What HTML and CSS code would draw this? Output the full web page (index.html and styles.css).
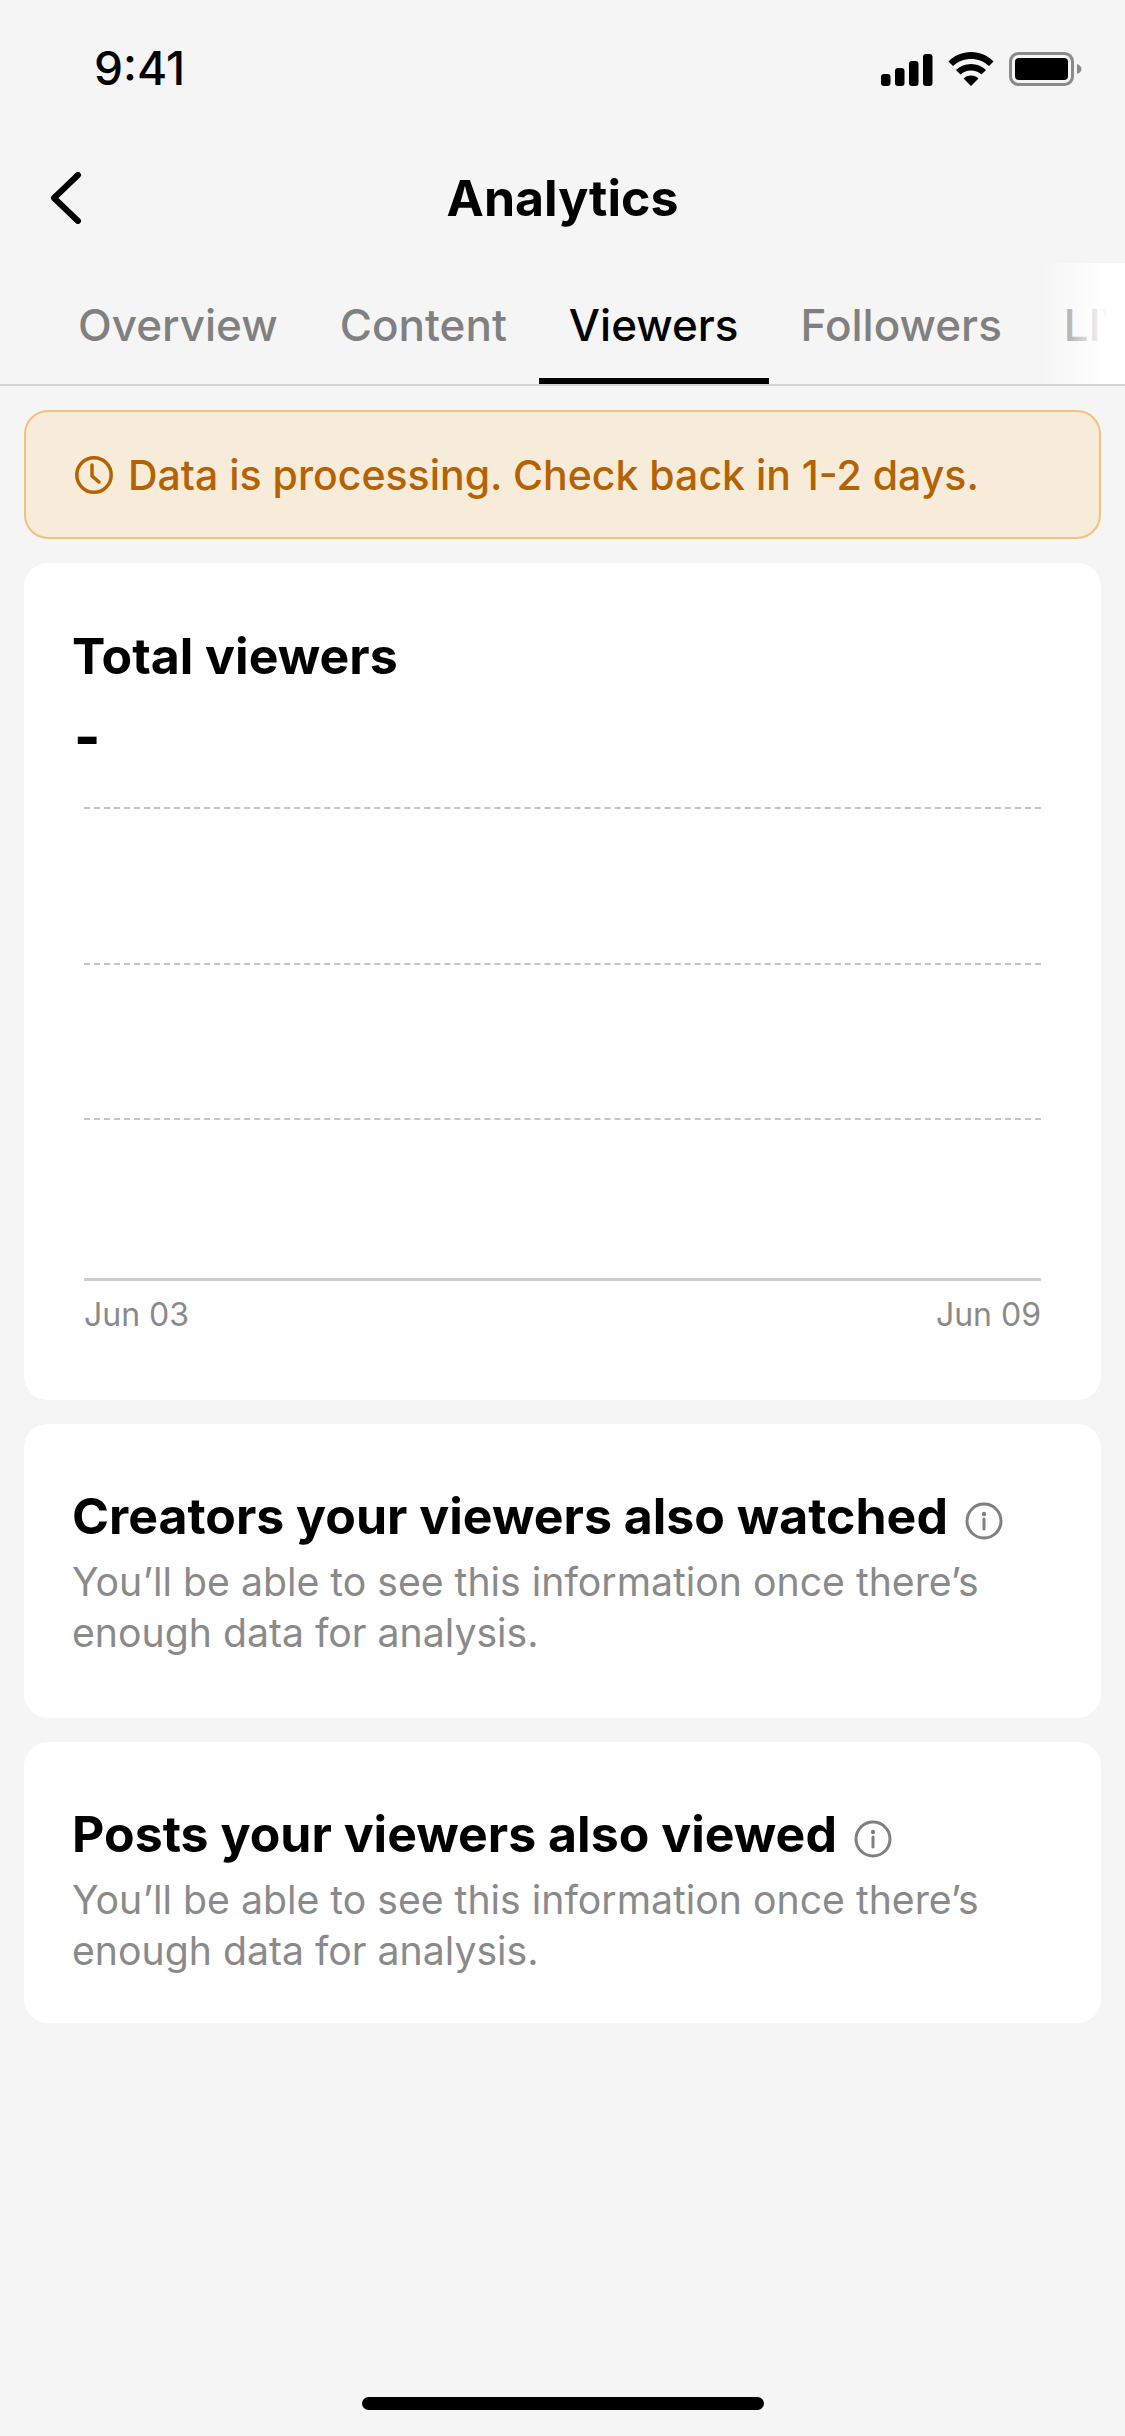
FILE: index.html
```html
<!DOCTYPE html>
<html lang="en">

<head>
    <meta charset="UTF-8">
    <meta name="viewport" content="width=device-width, initial-scale=1.0">
    <title>Analytics</title>
    <link rel="stylesheet" href="styles.css">
</head>

<body>
    <div class="status-bar">
        <span class="time">9:41</span>
        <div class="status-icons">
            <svg width="52" height="33" viewBox="0 0 52 33"><rect x="0" y="21" width="9.500" height="12" rx="3"/><rect x="14" y="15" width="9.500" height="18" rx="3"/><rect x="28" y="8" width="9.500" height="25" rx="3"/><rect x="42" y="1" width="9.500" height="32" rx="3"/></svg>
            <svg width="46" height="34" viewBox="0 0 46 34"><path d="M23 0C14 0 6.500 3.500 0.500 9.500L5 14C10 9.500 16 7 23 7s13 2.500 18 7l4.500-4.500C39.500 3.500 32 0 23 0z"/><path d="M23 12c-6 0-11 2-15 6l4.500 4.500C15.500 20 19 18.500 23 18.500s7.500 1.500 10.500 4L38 18c-4-4-9-6-15-6z"/><path d="M23 23.500c-3 0-5.500 1-7.500 3L23 34l7.500-7.500c-2-2-4.500-3-7.500-3z"/></svg>
            <svg width="73" height="34" viewBox="0 0 73 34"><rect class="batt-edge" x="1.500" y="1.500" width="62" height="31" rx="8"/><rect x="6" y="6" width="53" height="22" rx="4"/><path class="batt-cap" d="M68 12c3 1 4.500 3 4.500 5s-1.500 4-4.500 5z"/></svg>
        </div>
    </div>

    <header class="nav-bar">
        <svg class="back" width="34" height="52" viewBox="0 0 34 52"><path d="M30 3L6 26l24 23"/></svg>
        <h1 class="nav-title">Analytics</h1>
    </header>

    <nav class="tabs">
        <a class="tab">Overview</a>
        <a class="tab">Content</a>
        <a class="tab active">Viewers</a>
        <a class="tab">Followers</a>
        <a class="tab">LIVE</a>
        <div class="tabs-fade"></div>
    </nav>

    <main class="content">
        <div class="notice">
            <svg width="38" height="38" viewBox="0 0 38 38"><circle cx="19" cy="19" r="17.200"/><path d="M17 9v11l7 6"/></svg>
            <span>Data is processing. Check back in 1-2 days.</span>
        </div>

        <section class="card chart-card">
            <h2 class="card-title">Total viewers</h2>
            <div class="total">-</div>
            <div class="chart">
                <div class="grid-line"></div>
                <div class="grid-line"></div>
                <div class="grid-line"></div>
                <div class="axis"></div>
            </div>
            <div class="dates">
                <span>Jun 03</span>
                <span>Jun 09</span>
            </div>
        </section>

        <section class="card info-card">
            <h2 class="card-title">Creators your viewers also watched
                <svg class="info" width="38" height="38" viewBox="0 0 38 38"><circle cx="19" cy="19" r="17"/><circle class="dot" cx="19" cy="12" r="2.200"/><path d="M19 17v10"/></svg>
            </h2>
            <p class="card-text">You’ll be able to see this information once there’s enough data for analysis.</p>
        </section>

        <section class="card info-card short">
            <h2 class="card-title">Posts your viewers also viewed
                <svg class="info" width="38" height="38" viewBox="0 0 38 38"><circle cx="19" cy="19" r="17"/><circle class="dot" cx="19" cy="12" r="2.200"/><path d="M19 17v10"/></svg>
            </h2>
            <p class="card-text">You’ll be able to see this information once there’s enough data for analysis.</p>
        </section>
    </main>

    <div class="home-bar"></div>
</body>

</html>
```

FILE: styles.css
```css
* {
    box-sizing: border-box;
    margin: 0;
    padding: 0;
}

body {
    width: 1125px;
    height: 2436px;
    overflow: hidden;
    background: #f5f5f5;
    color: #000;
    font-family: Inter, 'Liberation Sans', sans-serif;
    display: flex;
    flex-direction: column;
}

.status-bar {
    height: 136px;
    display: flex;
    justify-content: space-between;
    align-items: flex-start;
    padding: 46px 43px 0 94px;
}

.time {
    font-size: 46px;
    line-height: 44px;
    font-weight: 500;
}

.status-icons {
    display: flex;
    align-items: center;
    gap: 15px;
    padding-top: 6px;
}

.batt-edge {
    fill: none;
    stroke: #8a8a8a;
    stroke-width: 3;
}

.batt-cap {
    fill: #8a8a8a;
}

.nav-bar {
    height: 124px;
    display: flex;
    align-items: center;
    justify-content: center;
    position: relative;
}

.back {
    position: absolute;
    left: 48px;
    top: 36px;
}

.back path {
    fill: none;
    stroke: #000;
    stroke-width: 6;
    stroke-linecap: round;
    stroke-linejoin: round;
}

.nav-title {
    font-size: 50px;
    font-weight: 700;
    line-height: 60px;
}

.tabs {
    height: 126px;
    display: flex;
    padding-left: 48px;
    gap: 2px;
    border-bottom: 2px solid #d4d4d4;
    position: relative;
    overflow: hidden;
}

.tab {
    padding: 38px 30px 0;
    font-size: 44px;
    line-height: 54px;
    font-weight: 500;
    color: #808080;
    white-space: nowrap;
}

.tab.active {
    color: #000;
    box-shadow: inset 0 -6px 0 #000;
}

.tabs-fade {
    position: absolute;
    right: 0;
    top: 3px;
    bottom: 0;
    width: 85px;
    background: linear-gradient(to right, rgba(255, 255, 255, 0), #fff 80%);
}

.content {
    padding: 24px 24px 0;
    display: flex;
    flex-direction: column;
    gap: 24px;
}

.notice {
    height: 129px;
    padding-left: 49px;
    display: flex;
    align-items: center;
    gap: 15px;
    background: #f7ebda;
    border: 2px solid #f0c27e;
    border-radius: 24px;
    color: #b56200;
    font-size: 41px;
    font-weight: 500;
}

.notice svg {
    flex: none;
}

.notice circle,
.notice path {
    fill: none;
    stroke: #b56200;
    stroke-width: 3.500;
    stroke-linecap: round;
    stroke-linejoin: round;
}

.card {
    background: #fff;
    border-radius: 24px;
    padding: 0 48px;
}

.chart-card {
    height: 837px;
    padding-top: 63px;
}

.card-title {
    font-size: 50px;
    line-height: 60px;
    font-weight: 700;
    white-space: nowrap;
}

.total {
    margin-top: 20px;
    padding-left: 2px;
    font-size: 56px;
    line-height: 62px;
    font-weight: 800;
}

.chart {
    margin: 39px 12px 0;
    display: flex;
    flex-direction: column;
}

.grid-line {
    height: 155.500px;
    border-top: 2px dashed #c4c4c4;
}

.axis {
    border-top: 3px solid #cdcdcd;
    margin-top: 4px;
}

.dates {
    margin: 14px 12px 0 12px;
    display: flex;
    justify-content: space-between;
    font-size: 32px;
    line-height: 40px;
    color: #8a8a8a;
}

.info-card {
    height: 294px;
    padding-top: 62px;
}

.info-card.short {
    height: 281px;
}

.info {
    vertical-align: -6px;
    margin-left: 5px;
}

.info circle,
.info path {
    fill: none;
    stroke: #808080;
    stroke-width: 3;
    stroke-linecap: round;
}

.info .dot {
    fill: #808080;
    stroke: none;
}

.card-text {
    width: 960px;
    margin-top: 10px;
    font-size: 39.200px;
    line-height: 51px;
    color: #8a8a8a;
}

.home-bar {
    position: absolute;
    left: 362px;
    top: 2397px;
    width: 402px;
    height: 13px;
    border-radius: 7px;
    background: #000;
}
```
